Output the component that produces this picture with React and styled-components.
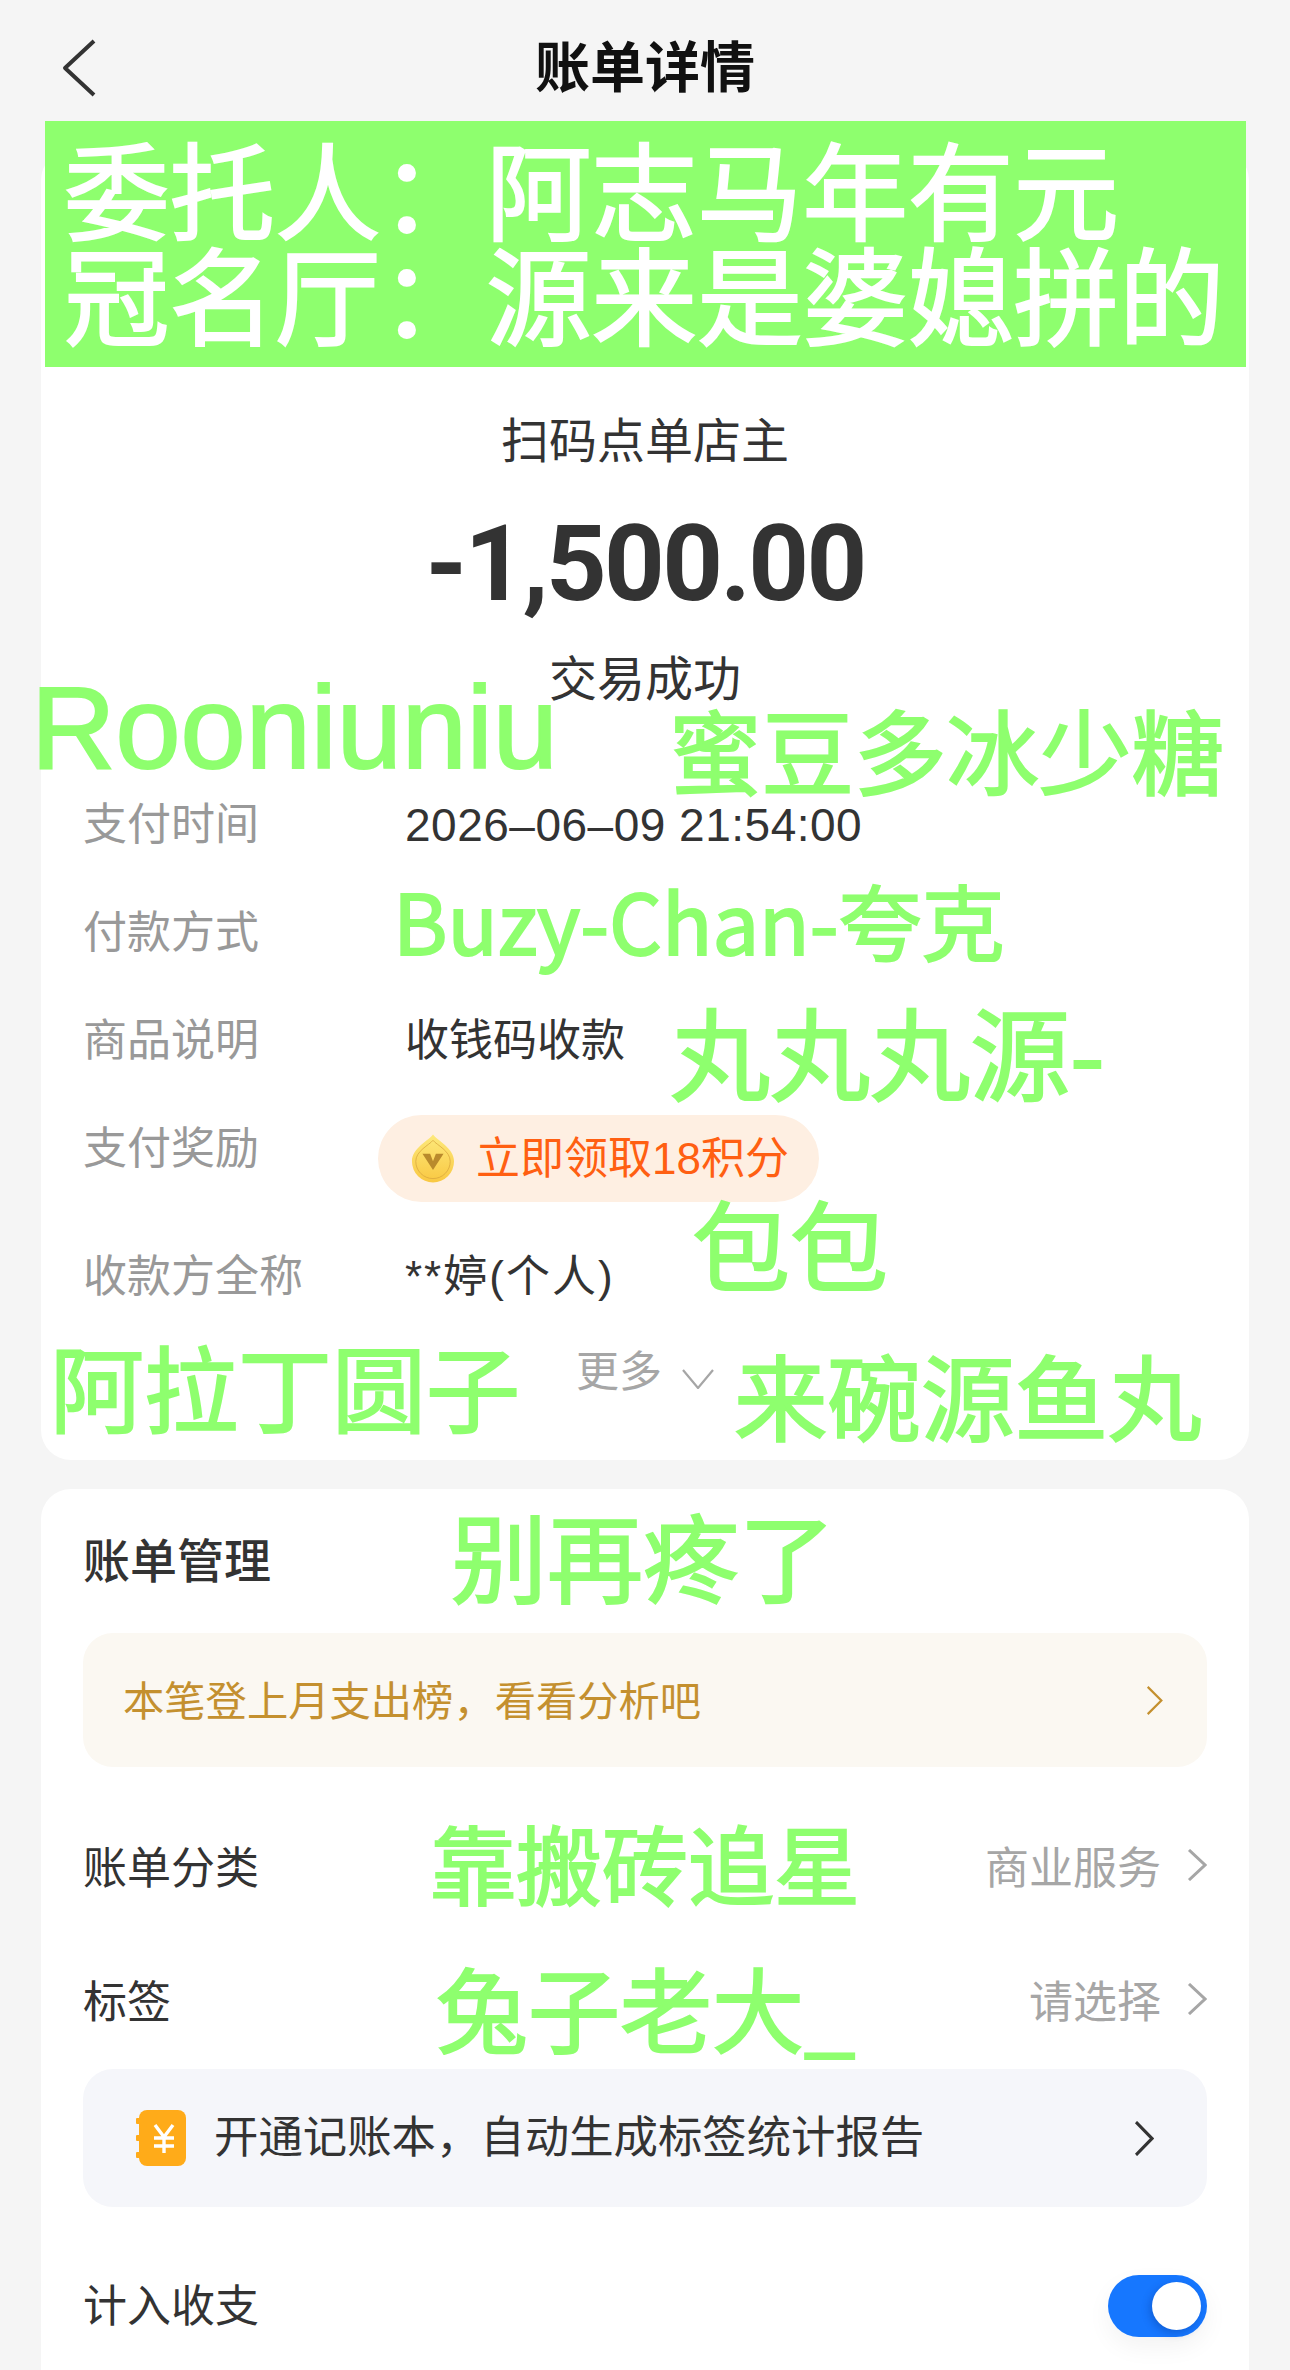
import React from "react";
import styled, { createGlobalStyle } from "styled-components";

const CJK = `"Liberation Sans", "Noto Sans CJK SC", sans-serif`;
const HAN = `"Noto Sans CJK SC", sans-serif`;

const GlobalStyle = createGlobalStyle`
  html, body {
    margin: 0;
    padding: 0;
    background: #f5f5f5;
  }
  body {
    font-family: ${CJK};
    color: #333;
  }
`;

// green name stamps sprinkled over the page
const stamps = [
  { text: "Rooniuniu", x: 31, y: 658, size: 117, latin: true },
  { text: "蜜豆多冰少糖", x: 669, y: 693, size: 92.5 },
  { text: "Buzy-Chan-夸克", x: 393, y: 870, size: 83 },
  { text: "丸丸丸源-", x: 670, y: 990, size: 100 },
  { text: "包包", x: 692, y: 1183, size: 98 },
  { text: "阿拉丁圆子", x: 50, y: 1329, size: 94 },
  { text: "来碗源鱼丸", x: 734, y: 1338, size: 93.5 },
  { text: "别再疼了", x: 451, y: 1496, size: 96 },
  { text: "靠搬砖追星", x: 430, y: 1810, size: 86 },
  { text: "兔子老大_", x: 436, y: 1951, size: 92 },
];

const BackIcon = () => (
  <svg width="34" height="58" viewBox="0 0 34 58" fill="none">
    <path d="M32 2 L3 29 L32 56" stroke="#333" strokeWidth="4" strokeLinejoin="round" />
  </svg>
);

const Chevron = ({ color = "#a6a6a6", w = 20, h = 32, sw = 3 }) => (
  <svg width={w} height={h} viewBox="0 0 20 32" fill="none" preserveAspectRatio="none">
    <path d="M2 1 L18 16 L2 31" stroke={color} strokeWidth={sw} />
  </svg>
);

const DownChevron = () => (
  <svg width="32" height="20" viewBox="0 0 32 20" fill="none">
    <path d="M1 1 L16 19 L31 1" stroke="#a6a6a6" strokeWidth="2.2" />
  </svg>
);

const CoinIcon = () => (
  <svg width="44" height="49" viewBox="0 0 46 50">
    <defs>
      <linearGradient id="coinFill" x1="0" y1="0" x2="0" y2="1">
        <stop offset="0" stopColor="#fde97c" />
        <stop offset="1" stopColor="#f9c842" />
      </linearGradient>
    </defs>
    <path d="M23 0 C27 6 45 14 45 28 A22 22 0 0 1 1 28 C1 14 19 6 23 0 Z" fill="url(#coinFill)" />
    <path d="M23 6 C27 11 41 17 41 28 A18 18 0 0 1 5 28 C5 17 19 11 23 6 Z" fill="none" stroke="#d9a63c" strokeWidth="0.8" />
    <path d="M12 20 H20 L23 28 L26 20 H34 L23 37 Z" fill="#b98a2c" />
  </svg>
);

const LedgerIcon = () => (
  <svg width="50" height="56" viewBox="0 0 50 56">
    <rect x="3" y="0" width="47" height="56" rx="8" fill="#ffab19" />
    <rect x="0" y="8" width="5" height="6" rx="1" fill="#ffab19" />
    <rect x="0" y="25" width="5" height="6" rx="1" fill="#ffab19" />
    <rect x="0" y="42" width="5" height="6" rx="1" fill="#ffab19" />
    <path d="M19 15 L28 27 L37 15 M18 28 H38 M18 36 H38 M28 27 V43" stroke="#fff" strokeWidth="3.4" fill="none" />
  </svg>
);

const App = () => {
  return (
    <>
      <GlobalStyle />
      <Page>
        <Header>
          <BackButton>
            <BackIcon />
          </BackButton>
          <Title>账单详情</Title>
        </Header>

        <SummaryCard>
          <Payee>扫码点单店主</Payee>
          <Amount>-1,500.00</Amount>
          <Status>交易成功</Status>
          <Details>
            <DetailLabel>支付时间</DetailLabel>
            <DateValue>2026–06–09 21:54:00</DateValue>
            <DetailLabel>付款方式</DetailLabel>
            <DetailValue />
            <DetailLabel>商品说明</DetailLabel>
            <DetailValue>收钱码收款</DetailValue>
            <DetailLabel $tall>支付奖励</DetailLabel>
            <DetailValue>
              <RewardPill>
                <CoinIcon />
                <RewardText>立即领取18积分</RewardText>
              </RewardPill>
            </DetailValue>
            <DetailLabel>收款方全称</DetailLabel>
            <PayeeName>**婷(个人)</PayeeName>
          </Details>
          <MoreRow>
            更多
            <MoreIcon>
              <DownChevron />
            </MoreIcon>
          </MoreRow>
        </SummaryCard>

        <ManageCard>
          <SectionTitle>账单管理</SectionTitle>
          <InsightBox>
            <InsightText>本笔登上月支出榜，看看分析吧</InsightText>
            <Chevron color="#c4902f" w={17} h={29} sw={2.6} />
          </InsightBox>
          <FormRow>
            <span>账单分类</span>
            <FormValue>
              商业服务
              <Chevron />
            </FormValue>
          </FormRow>
          <FormRow>
            <span>标签</span>
            <FormValue>
              请选择
              <Chevron />
            </FormValue>
          </FormRow>
          <PromoBox>
            <PromoLabel>
              <LedgerIcon />
              <PromoText>开通记账本，自动生成标签统计报告</PromoText>
            </PromoLabel>
            <Chevron color="#333" w={20} h={35} sw={3} />
          </PromoBox>
          <ToggleRow>
            <span>计入收支</span>
            <Toggle>
              <Knob />
            </Toggle>
          </ToggleRow>
        </ManageCard>

        <Banner>
          <div>委托人：阿志马年有元</div>
          <div>冠名厅：源来是婆媳拼的</div>
        </Banner>
        {stamps.map((s) => (
          <Stamp key={s.text} $x={s.x} $y={s.y} $size={s.size} $latin={s.latin}>
            {s.text}
          </Stamp>
        ))}
      </Page>
    </>
  );
};

const Page = styled.div`
  position: relative;
  width: 1290px;
  height: 2370px;
  overflow: hidden;
  background: #f5f5f5;
`;

const Header = styled.header`
  position: relative;
  height: 150px;
  display: flex;
  align-items: flex-start;
  justify-content: center;
`;

const BackButton = styled.div`
  position: absolute;
  left: 62px;
  top: 39px;
  line-height: 0;
`;

const Title = styled.h1`
  margin: 30px 0 0;
  font-size: 55px;
  line-height: 76px;
  font-weight: 700;
  color: #111;
`;

const Card = styled.section`
  margin: 0 41px;
  background: #fff;
  border-radius: 30px;
  padding: 0 42px;
`;

const SummaryCard = styled(Card)`
  height: 1310px;
  display: flex;
  flex-direction: column;
  align-items: center;
  box-sizing: border-box;
  padding-top: 258px;
`;

const Payee = styled.div`
  font-size: 48px;
  line-height: 68px;
`;

const Amount = styled.div`
  margin-top: 26px;
  font-family: Roboto, sans-serif;
  font-size: 106px;
  line-height: 124px;
  font-weight: 700;
  letter-spacing: -2.7px;
`;

const Status = styled.div`
  margin-top: 20px;
  font-size: 48px;
  line-height: 68px;
`;

const Details = styled.div`
  align-self: stretch;
  margin-top: 81px;
  display: grid;
  grid-template-columns: 322px 1fr;
  grid-auto-rows: auto;
  font-size: 44px;
  line-height: 60px;
`;

const DetailLabel = styled.div`
  color: #999;
  padding-bottom: ${(p) => (p.$tall ? 68 : 48)}px;
`;

const DetailValue = styled.div`
  color: #333;
  min-height: 60px;
`;

const DateValue = styled(DetailValue)`
  font-size: 46px;
  letter-spacing: 0.5px;
`;

const PayeeName = styled(DetailValue)`
  letter-spacing: 2px;
`;

const RewardPill = styled.div`
  display: inline-flex;
  align-items: center;
  gap: 21px;
  height: 87px;
  margin: -4px 0 0 -27px;
  padding: 0 30px 0 33px;
  border-radius: 44px;
  background: #feefe2;
`;

const RewardText = styled.span`
  font-size: 44px;
  color: #ff5f12;
`;

const MoreRow = styled.div`
  display: flex;
  align-items: center;
  gap: 20px;
  margin-top: -13px;
  align-self: flex-start;
  margin-left: 493px;
  font-size: 43px;
  line-height: 60px;
  color: #a6a6a6;
`;

const MoreIcon = styled.span`
  display: block;
  line-height: 0;
  margin-top: 14px;
`;

const ManageCard = styled(Card)`
  margin-top: 29px;
  padding-top: 40px;
  height: 900px;
`;

const SectionTitle = styled.h2`
  margin: 0;
  font-size: 47px;
  line-height: 66px;
  font-weight: 500;
`;

const Box = styled.div`
  display: flex;
  align-items: center;
  justify-content: space-between;
  border-radius: 30px;
`;

const InsightBox = styled(Box)`
  margin: 38px 0 34px;
  height: 134px;
  padding: 0 44px 0 40px;
  background: #fbf8f2;
`;

const InsightText = styled.span`
  font-size: 41.3px;
  padding-bottom: 5px;
  color: #c4902f;
`;

const FormRow = styled.div`
  display: flex;
  align-items: center;
  justify-content: space-between;
  box-sizing: border-box;
  height: 134px;
  padding-bottom: 6px;
  font-size: 44px;
  color: #333;
`;

const FormValue = styled.span`
  display: inline-flex;
  align-items: center;
  gap: 26px;
  color: #a6a6a6;
`;

const PromoBox = styled(Box)`
  height: 138px;
  padding: 0 53px 0 53px;
  background: #f5f6fa;
`;

const PromoLabel = styled.span`
  display: inline-flex;
  align-items: center;
  gap: 28px;
  font-size: 44.4px;
  color: #333;
`;

const PromoText = styled.span`
  padding-bottom: 10px;
`;

const ToggleRow = styled(FormRow)`
  margin-top: 32px;
`;

const Toggle = styled.div`
  position: relative;
  width: 99px;
  height: 62px;
  margin-top: 6px;
  border-radius: 31px;
  background: #1677ff;
  box-shadow: 0 10px 24px rgba(0, 0, 0, 0.05);
`;

const Knob = styled.div`
  position: absolute;
  right: 6px;
  top: 7px;
  width: 49px;
  height: 48px;
  border-radius: 50%;
  background: #fff;
  box-shadow: -2px 3px 8px rgba(0, 40, 120, 0.3);
`;

const Banner = styled.div`
  position: absolute;
  left: 45px;
  top: 121px;
  width: 1201px;
  height: 246px;
  box-sizing: border-box;
  padding: 13px 0 0 19px;
  background: #8eff6e;
  color: #fff;
  font-family: ${HAN};
  font-size: 105.5px;
  font-weight: 400;
  line-height: 105px;
  -webkit-text-stroke: 2px #fff;
`;

const Stamp = styled.div`
  position: absolute;
  left: ${(p) => p.$x}px;
  top: ${(p) => p.$y}px;
  font-family: ${(p) => (p.$latin ? CJK : HAN)};
  font-size: ${(p) => p.$size}px;
  line-height: 1.2;
  white-space: nowrap;
  color: #8eff6e;
  -webkit-text-stroke: 2px #8eff6e;
`;

export default App;
